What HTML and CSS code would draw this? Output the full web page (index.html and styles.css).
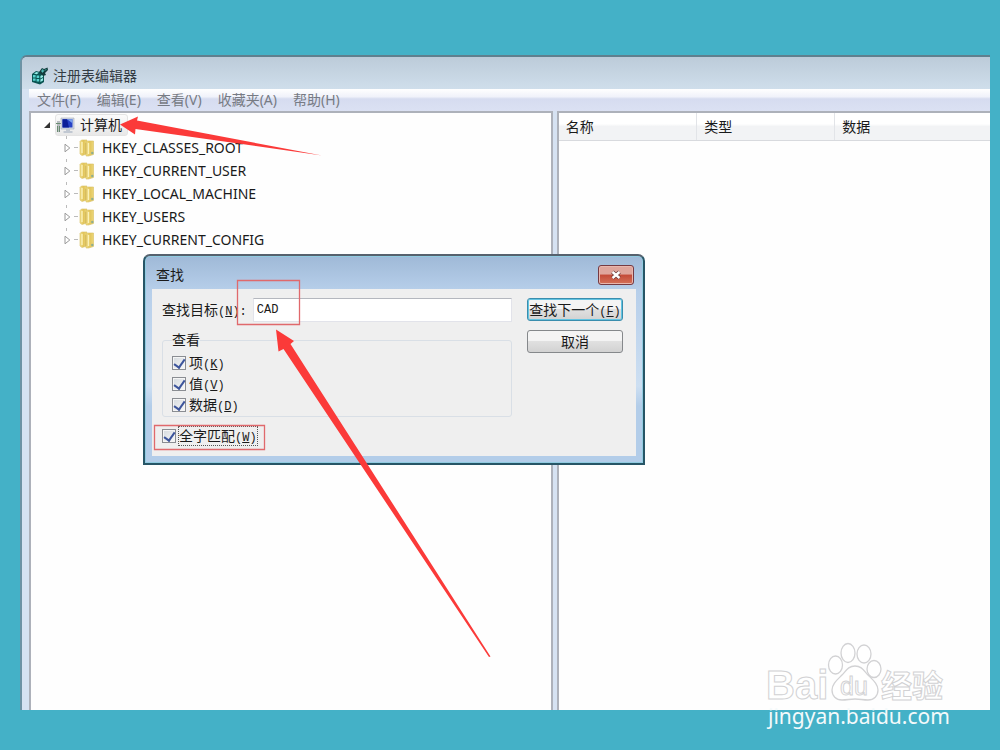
FILE: index.html
```
<!DOCTYPE html>
<html lang="zh-CN">
<head>
<meta charset="utf-8">
<title>注册表编辑器</title>
<link rel="stylesheet" href="styles.css">
</head>
<body>
<svg class="defs" width="0" height="0" aria-hidden="true">
  <defs>
    <linearGradient id="gold" x1="0" x2="1"><stop offset="0" stop-color="#f3e08a"/><stop offset=".5" stop-color="#e2c55c"/><stop offset="1" stop-color="#ecd678"/></linearGradient>
    <symbol id="folder" viewBox="0 0 16 18">
      <path d="M1 2.5 2.5 1H8v14l-5 1.5L1 15z" fill="url(#gold)" stroke="#d8bf62" stroke-width=".6"/>
      <path d="M7 3.5 9 2h5.5v13.5L9.5 17H7z" fill="url(#gold)" stroke="#d8bf62" stroke-width=".6"/>
      <path d="M3 3v11M9.5 4v11" stroke="#fbf1b8" stroke-width="1.4"/>
      <path d="M6.9 4v11" stroke="#c9ac50" stroke-width=".7"/>
      <circle cx="13.3" cy="14" r="1.2" fill="#8fae8e"/>
    </symbol>
    <symbol id="closed" viewBox="0 0 8 10"><path d="M1 1.2 5.8 5 1 8.8z" fill="#fff" stroke="#999"/></symbol>
  </defs>
</svg>

<main class="window">
  <header class="titlebar">
    <svg class="app-icon" viewBox="0 0 18 18" aria-hidden="true">
      <path d="M1 7 5 4l8 2v9l-4 2.5L1 15z" fill="#0a5553"/>
      <path d="M2 8h2.6v2.4H2zM5.6 8.6h2.6V11H5.6zM2 11.4h2.6v2.4H2zM5.6 12h2.6v2.6H5.6z" fill="#58d3cf"/>
      <path d="M9.4 9 12 7.6V10l-2.6 1.4zM9.4 12.4 12 11v2.6L9.4 15zM3 6.6 5.4 5l2.4.7-2 1.6z" fill="#98efea"/>
      <path d="m8 5 3-4 2 1 3.5-1.5L17 3l-3 3 1 2-3 1-2-2z" fill="#123c3d"/>
      <path d="m10.5 4 1.2-1.6 1 1.6-1.2 1.4zM13.500 3.400l2-1" fill="#50bdb9" stroke="#50bdb9" stroke-width=".7"/>
    </svg>
    <h1>注册表编辑器</h1>
  </header>
  <nav class="menubar">
    <button type="button">文件(F)</button>
    <button type="button">编辑(E)</button>
    <button type="button">查看(V)</button>
    <button type="button">收藏夹(A)</button>
    <button type="button">帮助(H)</button>
  </nav>
  <div class="panes">
    <section class="tree">
      <div class="root">
        <svg class="open-arrow" viewBox="0 0 8 8" aria-hidden="true"><path d="M7 1v6H1z" fill="#333"/></svg>
        <span class="root-label">
          <svg class="computer" viewBox="0 0 19 18" aria-hidden="true">
            <path d="M1 5h3v11H1z" fill="#b8bdc0"/><path d="M0 7.5h5M1.5 10v6M3.5 10v6" stroke="#698b71"/>
            <path d="M5 2h13v11H5z" fill="#d5dbe5" stroke="#a5adbb" stroke-width=".6"/>
            <path d="M6.5 3.3h10v8.2h-10z" fill="#2742c6"/><path d="M6.5 3.3H11l2 8.2H6.5z" fill="#0c1e99"/><path d="m11 3.3 5.5 4v-4z" fill="#7aa0ec"/>
            <path d="M10 13h4v2h2.5v2h-9v-2H10z" fill="#c1c8d2"/>
          </svg>
          计算机
        </span>
      </div>
      <ul class="keys">
        <li><svg class="closed"><use href="#closed"/></svg><svg class="folder"><use href="#folder"/></svg><span>HKEY_CLASSES_ROOT</span></li>
        <li><svg class="closed"><use href="#closed"/></svg><svg class="folder"><use href="#folder"/></svg><span>HKEY_CURRENT_USER</span></li>
        <li><svg class="closed"><use href="#closed"/></svg><svg class="folder"><use href="#folder"/></svg><span>HKEY_LOCAL_MACHINE</span></li>
        <li><svg class="closed"><use href="#closed"/></svg><svg class="folder"><use href="#folder"/></svg><span>HKEY_USERS</span></li>
        <li><svg class="closed"><use href="#closed"/></svg><svg class="folder"><use href="#folder"/></svg><span>HKEY_CURRENT_CONFIG</span></li>
      </ul>
    </section>
    <section class="values">
      <table>
        <thead><tr><th class="col">名称</th><th class="col">类型</th><th>数据</th></tr></thead>
      </table>
    </section>
  </div>
</main>

<form class="dialog" role="dialog" aria-labelledby="find-title">
  <header class="dialog-title">
    <h2 id="find-title">查找</h2>
    <button type="button" class="close" aria-label="关闭">
      <svg viewBox="0 0 12 10" aria-hidden="true"><path d="m2.500 2 7 6m0-6-7 6" stroke="#6b3a3a" stroke-width="4"/><path d="m2.500 2 7 6m0-6-7 6" stroke="#fff" stroke-width="2.400"/></svg>
    </button>
  </header>
  <div class="client">
    <div class="fields">
      <div class="target">
        <label for="target">查找目标<span class="key">(<u>N</u>):</span></label>
        <input id="target" type="text" value="CAD">
      </div>
      <fieldset>
        <legend>查看</legend>
        <label class="check"><input type="checkbox" checked><span>项<span class="key">(<u>K</u>)</span></span></label>
        <label class="check"><input type="checkbox" checked><span>值<span class="key">(<u>V</u>)</span></span></label>
        <label class="check"><input type="checkbox" checked><span>数据<span class="key">(<u>D</u>)</span></span></label>
      </fieldset>
      <label class="check whole"><input type="checkbox" checked><span class="focused">全字匹配<span class="key">(<u>W</u>)</span></span></label>
    </div>
    <div class="actions">
      <button type="submit" class="default">查找下一个<span class="key">(<u>F</u>)</span></button>
      <button type="button">取消</button>
    </div>
  </div>
</form>

<svg class="marks" viewBox="0 0 1000 750" aria-hidden="true">
  <path d="M120 124.500 138 116.500 137 120.500 322 155.500 135.500 129 135 134.500z" fill="#fb3a39"/>
  <path d="m276 329.500 18 11.500-3.500 3L490.500 656.500 489 657 283.500 349l-5 2.500z" fill="#fb3a39"/>
  <path d="M237.500 280.500h62v44h-62zM154.500 425.500h110v24h-110z" fill="none" stroke="#e0696c" stroke-width="1.300"/>
</svg>

<div class="watermark">
  <svg class="logo" viewBox="0 0 180 62" role="img" aria-label="Baidu 经验">
    <g fill="#fff" stroke="#d2d2d4" stroke-width="1.300">
      <ellipse cx="67.500" cy="24" rx="7" ry="9"/>
      <ellipse cx="80" cy="12" rx="7" ry="9.500"/>
      <ellipse cx="96" cy="13" rx="7" ry="9"/>
      <ellipse cx="106" cy="28" rx="7" ry="8.500"/>
      <path d="M87 25c7 0 9 5 13 9 5 5 10 9 10 15 0 6-4 10-10 10-5 0-8-1-13-1s-8 1-13 1c-6 0-10-4-10-10 0-6 5-10 10-15 4-4 6-9 13-9z"/>
    </g>
    <text class="outline bai" x="-2" y="58">Bai</text>
    <text class="outline du" x="72" y="54">du</text>
    <text class="outline jingyan" x="113" y="56">经验</text>
  </svg>
  <span class="site">jingyan.baidu.com</span>
</div>
</body>
</html>
```
FILE: styles.css
```
* { box-sizing: border-box; }

body {
  position: relative;
  display: flex;
  min-height: 100vh;
  margin: 0;
  padding: 55px 10px 40px 20px;
  background: #44b1c7;
  color: #1a1a1a;
  font: 14px "Noto Sans", "Noto Sans CJK SC", sans-serif;
}

.defs { position: absolute; }

h1, h2 { margin: 0; font-size: 14px; font-weight: 400; }

button, input { font: inherit; color: inherit; }

/* Main window */
.window {
  flex: 1;
  display: flex;
  flex-direction: column;
  border-top: 2px solid #607f8e;
  border-left: 2px solid #6d93a5;
  border-top-left-radius: 7px;
  background: #d6e2f2;
  overflow: hidden;
}

.titlebar {
  display: flex;
  align-items: center;
  gap: 4px;
  height: 32px;
  padding: 6px 9px 0;
  background: linear-gradient(#bccbd9, #cfdeeb);
  line-height: 20px;
}

.titlebar h1 { color: #333c44; }

.app-icon { width: 18px; height: 18px; }

.menubar {
  display: flex;
  gap: 16px;
  height: 22px;
  margin-left: 7px;
  padding: 0 8px;
  background: linear-gradient(#fff 0, #f0f2fa 35%, #d6dcf0 45%, #dbe1f3 100%);
}

.menubar button {
  padding: 0;
  border: 0;
  background: none;
  color: #777b84;
  font-size: 14px;
  line-height: 22px;
}

.panes { flex: 1; display: flex; gap: 4px; padding-left: 7px; }

.tree {
  flex: 0 0 54.500%;
  padding: 1px 12px;
  border: 2px solid #adb1ba;
  border-bottom: 0;
  background: #fefefe;
}

.root { display: flex; align-items: center; height: 22px; }

.open-arrow { width: 8px; height: 8px; margin-right: 4px; }

.root-label {
  display: flex;
  align-items: center;
  gap: 5px;
  height: 22px;
  padding-right: 5px;
  border: 1px solid #e4e4e4;
  border-radius: 3px;
  background: linear-gradient(#fbfbfb, #e8e8e8);
  line-height: 18px;
}

.computer { width: 19px; height: 18px; }

.keys { margin: 0 0 0 21px; padding: 0; list-style: none; }

.keys li {
  display: flex;
  align-items: center;
  height: 23px;
  background: linear-gradient(#bbb, #bbb) 2px 0 / 1px 3px no-repeat;
}

.keys li::before {
  content: "";
  order: 1;
  width: 4px;
  height: 1px;
  margin: 0 1px 0 2px;
  background: #bbb;
}

.closed { width: 8px; height: 10px; }
.folder { order: 2; width: 16px; height: 18px; margin-right: 7px; }
.keys span { order: 3; }

.values {
  flex: 1;
  border-top: 2px solid #adb1ba;
  border-left: 2px solid #adb1ba;
  background: #fefefe;
}

table { width: 100%; border-collapse: collapse; table-layout: fixed; }

th {
  height: 27px;
  padding: 0 7px;
  border-bottom: 1px solid #d8dade;
  background: linear-gradient(#fff 40%, #f2f3f5 50%, #f2f3f5);
  font-weight: 400;
  text-align: left;
}

.col { width: 138px; border-right: 1px solid #e2e4e8; }

/* Find dialog */
.dialog {
  position: absolute;
  top: 254px;
  left: 143px;
  width: 502px;
  padding: 0 7px 7px;
  border: 2px solid #275566;
  border-top-color: #56616d;
  border-radius: 7px 7px 0 0;
  background: linear-gradient(#9fb9d7, #b7cfea 35px, #cddff2 130px, #b3cde9 150px);
  box-shadow: inset 0 0 0 1px #91cbe0;
}

.dialog-title {
  display: flex;
  align-items: center;
  justify-content: space-between;
  height: 33px;
  padding: 5px 2px 0 4px;
}

.dialog-title h2 { line-height: 20px; }

.close {
  display: grid;
  place-items: center;
  width: 36px;
  height: 20px;
  padding: 0;
  border: 1px solid #763a42;
  border-radius: 3px;
  background: linear-gradient(#dfa59c 45%, #c44a38 50%, #d4725a);
  box-shadow: inset 0 0 0 1px #e9b7ae;
}

.close svg { width: 12px; height: 10px; }

.client {
  display: grid;
  grid-template-columns: 1fr 96px;
  gap: 15px;
  padding: 9px 13px 11px 10px;
  background: #efefef;
}

.key { font: 12px "Liberation Mono", monospace; }

.target { display: flex; align-items: center; gap: 6px; height: 24px; line-height: 18px; }

.target input {
  flex: 1;
  min-width: 0;
  height: 24px;
  padding: 0 3px;
  border: 1px solid #e2e3ea;
  border-top-color: #b4b7be;
  background: #fff;
  font: 12px "Liberation Mono", monospace;
}

fieldset {
  min-width: 0;
  margin: 9px 0 10px;
  padding: 3px 9px 1px;
  border: 1px solid #d9dfe6;
  border-radius: 3px;
}

legend { padding: 0; line-height: 18px; }

.check { display: flex; align-items: center; gap: 3px; height: 21px; line-height: 18px; }

.check input {
  appearance: none;
  display: grid;
  justify-content: center;
  width: 14px;
  height: 14px;
  margin: 0;
  border: 1px solid #8a8d92;
  background: linear-gradient(135deg, #d5dade, #f8f8f8);
  box-shadow: inset 0 0 0 1px #f5f5f5;
}

.check input:checked::after {
  content: "";
  width: 5px;
  height: 9px;
  border: solid #3c549b;
  border-width: 0 2px 2px 0;
  transform: rotate(35deg);
}

.whole { height: 18px; }

.focused { outline: 1px dotted #555; }

.actions { display: flex; flex-direction: column; gap: 9px; }

.actions button {
  height: 23px;
  padding: 0;
  border: 1px solid #85888b;
  border-radius: 3px;
  background: linear-gradient(#f4f4f4 45%, #e0e0e0 50%, #d2d2d2);
  line-height: 18px;
  white-space: nowrap;
}

.actions .default { border-color: #3a8eae; box-shadow: inset 0 0 0 1px #63c4e2; }

/* Annotations over the desktop */
.marks {
  position: absolute;
  top: 0;
  left: 0;
  width: 1000px;
  height: 750px;
  pointer-events: none;
}

.watermark {
  position: absolute;
  top: 641px;
  left: 768px;
  display: flex;
  flex-direction: column;
  gap: 4px;
}

.logo { width: 180px; height: 62px; overflow: visible; }

.outline { fill: #fff; stroke: #d2d2d4; stroke-width: 1px; }
.bai { font: 700 40px "Liberation Sans", sans-serif; }
.du { font: 400 25px "Liberation Sans", sans-serif; }
.jingyan { font: 700 31px "Noto Sans CJK SC", sans-serif; }

.site { color: #f4fafb; font-size: 21px; line-height: 18px; }
```
